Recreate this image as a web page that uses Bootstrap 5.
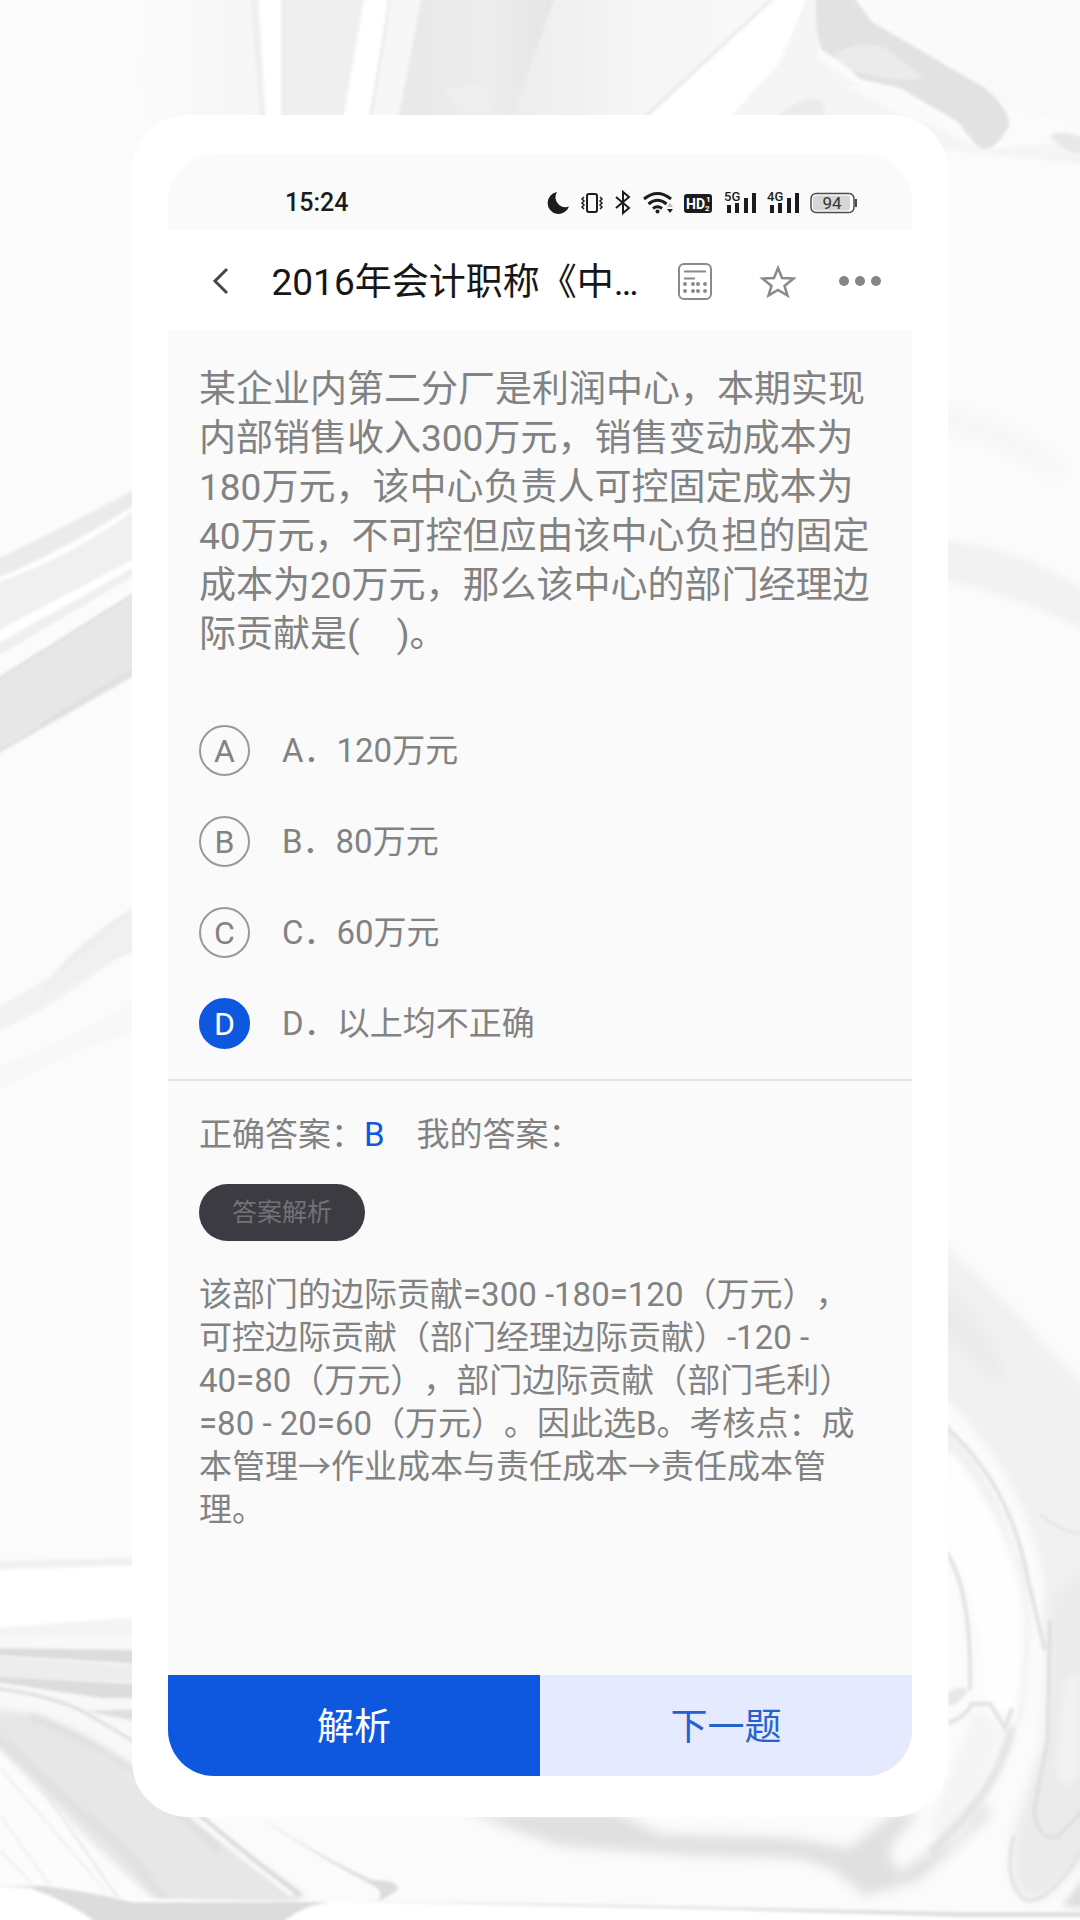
<!DOCTYPE html>
<html lang="zh-CN">
<head>
<meta charset="utf-8">
<meta name="viewport" content="width=device-width, initial-scale=1">
<title>答题</title>
<link href="https://cdn.jsdelivr.net/npm/bootstrap@5.3.0/dist/css/bootstrap.min.css" rel="stylesheet">
<style>
:root{--ink:#828282;--blue:#0d58df;--paper:#fafafa}
body{font-family:Roboto,"Noto Sans CJK SC",sans-serif;color:var(--ink);background:#fbfbfb;text-spacing-trim:space-all;font-feature-settings:"chws" 0,"halt" 0}
.backdrop{position:fixed;inset:0;width:100%;height:100%;z-index:-1}
.stage{padding:115px 24px 103px}
.phone{width:100%;max-width:816px;padding:40px 36px 41px;border-radius:56px;background:#fff}
.screen{border-radius:46px;overflow:hidden;background:var(--paper)}
.statusbar{height:75px;padding:20px 54px 0 117px;color:#1c1c20}
.clock{font-size:25px;font-weight:500;line-height:30px}
.appbar{height:101px;padding:0 24px 0 36px;background:#fff}
.appbar button{line-height:0;border:0}
.appbar h1{font-size:37px;line-height:48px;font-weight:400;color:#161616;padding-top:5px}
.question{padding:34px 31px 0}
.question p{font-size:37px;line-height:49px}
.choices{padding:66px 31px 30px;gap:40px}
.choice{font-size:33px;line-height:51px;gap:32px;cursor:pointer}
.choice i{width:51px;height:51px;border:2px solid #999;font-size:32px;font-style:normal;line-height:49px}
.choice input:checked+i{background:var(--blue);border-color:var(--blue);color:#fff}
.answers{border-top:2px solid #e4e4e4;padding:29px 36px 0 31px}
.answers dl{font-size:33px;line-height:50px}
.answers dd{color:var(--blue)}
.mine{margin-left:32px}
.pill{background:#3c3b42;color:#737277;font-size:25px;line-height:57px;padding:0 33px}
.explain{font-size:33px;line-height:43px;margin-top:32px}
.actions button{font-size:37px;line-height:97px;border:0;padding:4px 0 0;height:101px}
.go{background:var(--blue);color:#fff}
.next{background:#e5eafe;color:#2463cf}
</style>
<script src="https://cdn.jsdelivr.net/npm/bootstrap@5.3.0/dist/js/bootstrap.bundle.min.js"></script>
</head>
<body>
<svg class="backdrop" viewBox="0 0 1080 1920" preserveAspectRatio="xMidYMid slice" aria-hidden="true">
<defs>
<filter id="s1"><feGaussianBlur stdDeviation="1.500"/></filter>
<filter id="s2"><feGaussianBlur stdDeviation="3"/></filter>
<filter id="s4" x="-20%" y="-20%" width="140%" height="140%"><feGaussianBlur stdDeviation="6"/></filter>
<linearGradient id="g1"><stop offset="0" stop-color="#e8e8e8"/><stop offset=".6" stop-color="#ececec"/><stop offset="1" stop-color="#e5e5e5"/></linearGradient>
<linearGradient id="g2"><stop offset="0" stop-color="#ededed"/><stop offset=".5" stop-color="#f6f6f6"/><stop offset="1" stop-color="#f9f9f9"/></linearGradient>
<linearGradient id="g3"><stop offset="0" stop-color="#fbfbfb"/><stop offset="1" stop-color="#f6f6f6"/></linearGradient>
</defs>
<rect width="1080" height="1920" fill="#fbfbfb"/>
<g filter="url(#s1)">
<path d="M120 -5H255L266 120H150Z" fill="url(#g3)"/>
<path d="M250 -5H258L266 120H260Z" fill="#efefef"/>
<path d="M258 -5H281V120H266Z" fill="#fff"/>
<path d="M281 -5H365L343 120H281Z" fill="#efefef"/>
<path d="M365 -5H390L368 120H343Z" fill="#fff"/>
<path d="M390 -5H422L400 120H368Z" fill="#f7f7f7"/>
<path d="M389 -5H392L372 120H369Z" fill="#ececec"/>
<path d="M422 -5H556L512 120H398Z" fill="url(#g1)"/>
<path d="M440 90Q455 95 460 120H495Q480 90 500 80Z" fill="#eee"/>
<path d="M556 -5H780L645 120H512Z" fill="url(#g2)"/>
<path d="M774 -5H779L650 115H644Z" fill="#ebebeb"/>
<path d="M779 -5H808L800 25 780 62 728 120H645Z" fill="#fff"/>
<path d="M808 -5H818V60L850 80 980 150 1090 140V165L948 150 728 120 780 62Z" fill="#f5f5f5"/>
<path d="M850 -5H1090V125L1010 110 985 88Z" fill="#f9f9f9"/>
</g>
<g filter="url(#s1)">
<path d="M816 -5H852L872 22 985 88Q1006 105 1010 124L1000 140Q985 156 975 144L958 122 900 88 860 79 846 65 822 50Q815 38 816 -5Z" fill="#e2e2e2"/>
<path d="M834 56Q855 38 885 48L925 78Q900 84 850 70Z" fill="#ebebeb"/>
<path d="M778 116Q800 96 822 100L826 116Z" fill="#ebebeb"/>
<path d="M845 86Q890 80 945 125L910 120Z" fill="#fafafa"/>
<path d="M1050 136Q1060 128 1085 138V154Q1065 154 1050 136Z" fill="#e8e8e8"/>
</g>
<g filter="url(#s1)">
<path d="M-5 560Q70 525 140 486V510L-5 582Z" fill="#ebebeb"/>
<path d="M-5 582L140 504V560L-5 634Z" fill="#f0f0f0"/>
<path d="M-5 579Q60 554 140 502V506Q70 558 -5 583Z" fill="#fff"/>
<path d="M-5 632L140 556V564L-5 645Z" fill="#fff"/>
<path d="M-5 645L140 564V572L-5 658Z" fill="#efefef"/>
<path d="M-5 681L140 590V671L-5 754Z" fill="#e7e7e7"/>
<path d="M-5 681L140 590M-5 754L140 671M40 725L140 666" stroke="#dadada" stroke-width="2" fill="none"/>
<path d="M140 903V948Q60 985 35 1006 50 960 140 903Z" fill="#ededed"/>
<path d="M-5 1008Q80 965 140 903V940Q60 1005 -5 1033Z" fill="#f0f0f0" opacity=".8"/>
<path d="M-5 1068Q80 1035 140 998V1030Q70 1050 -5 1092Z" fill="#f8f8f8"/>
</g>
<g filter="url(#s4)">
<path d="M940 405Q1010 415 1070 470L1050 478Q1000 445 940 430Z" fill="#f7f7f7"/>
</g>
<g filter="url(#s2)">
<path d="M940 541Q1020 545 1090 595V632Q1010 592 940 580Z" fill="#f2f2f2"/>
</g>
<g filter="url(#s1)">
<path d="M-5 1561L140 1558V1565L-5 1569Z" fill="#f0f0f0"/>
<path d="M-5 1570L140 1566V1637H-5Z" fill="#fff"/>
<path d="M-5 1628Q70 1622 140 1617V1636H-5Z" fill="#f4f4f4"/>
<path d="M-5 1637H140V1650L-5 1646Z" fill="#f8f8f8"/>
<path d="M-5 1648L140 1650V1664L-5 1655Z" fill="#dcdcdc"/>
<path d="M-5 1656L140 1666V1682L-5 1678Z" fill="#ededed"/>
<path d="M-5 1677L140 1684V1698H100L-5 1682Z" fill="#dcdcdc"/>
<path d="M-5 1682L100 1698H140V1780L-5 1715Z" fill="#f8f8f8"/>
<path d="M85 1711L140 1709V1722Z" fill="#dfdfdf"/>
<path d="M-5 1688Q50 1695 84 1712L140 1745" stroke="#dcdcdc" stroke-width="3" fill="none"/>
</g>
<g filter="url(#s2)">
<path d="M-10 1710Q35 1708 70 1735L140 1782 190 1817 306 1895 290 1905H160L100 1850 -10 1740Z" fill="#e7e7e7"/>
<path d="M30 1716Q75 1730 140 1775L220 1850" stroke="#dedede" stroke-width="8" fill="none"/>
<path d="M-5 1735Q60 1795 130 1855L165 1902" stroke="#e0e0e0" stroke-width="9" fill="none"/>
<path d="M-10 1745Q60 1810 118 1900L60 1888H-10Z" fill="#fcfcfc"/>
</g>
<g filter="url(#s1)">
<path d="M0 1768L105 1890M0 1815L50 1886M0 1850L32 1884" stroke="#f2f2f2" stroke-width="3" fill="none"/>
<path d="M40 1785L118 1898" stroke="#e6e6e6" stroke-width="2" fill="none"/>
<path d="M184 1808L240 1855 292 1895" stroke="#f8f8f8" stroke-width="5" fill="none"/>
<path d="M196 1812L252 1858 300 1895" stroke="#dadada" stroke-width="4" fill="none"/>
<path d="M256 1815Q330 1862 372 1880 400 1880 398 1890L378 1902Q385 1890 370 1884 315 1855 256 1815Z" fill="#dcdcdc"/>
</g>
<g filter="url(#s4)">
<path d="M935 1238Q1000 1290 1095 1400V1720L1045 1650Q1020 1540 935 1440Z" fill="#f1f1f1"/>
<path d="M940 1285Q1000 1330 1004 1385 980 1370 940 1335Z" fill="#ebebeb"/>
<path d="M1052 1600Q1068 1575 1095 1570V1850L1058 1885Q1045 1905 1020 1895 1005 1870 1018 1820L1044 1740Z" fill="#ebebeb"/>
</g>
<g filter="url(#s2)">
<path d="M940 1393Q1030 1480 1045 1590L1038 1650Q1020 1500 940 1420Z" fill="#fbfbfb"/>
<path d="M948 1450Q1040 1550 1015 1710 1000 1720 985 1695 985 1610 948 1550Z" fill="#fefefe"/>
<path d="M1022 1560Q1034 1640 1018 1725" stroke="#f3f3f3" stroke-width="6" fill="none"/>
<path d="M975 1706L1004 1730Q985 1790 940 1842L930 1830Z" fill="#f5f5f5"/>
<path d="M1012 1726Q1000 1790 930 1852" stroke="#dedede" stroke-width="7" fill="none"/>
<path d="M1064 1680L1080 1670V1770Q1065 1800 1056 1770Z" fill="#f2f2f2"/>
<path d="M1062 1906L1085 1876V1908Z" fill="#dedede"/>
</g>
<g filter="url(#s1)">
<path d="M940 1422Q1010 1480 1028 1580L1045 1650" stroke="#e2e2e2" stroke-width="4" fill="none"/>
<path d="M946 1552Q972 1590 970 1690M948 1723Q965 1718 972 1704L990 1704 1005 1728 1012 1708" stroke="#e2e2e2" stroke-width="4" fill="none"/>
<path d="M948 1692Q960 1684 968 1690 960 1705 948 1706Z" fill="#e8e8e8"/>
<path d="M1050 1620L1048 1740 1034 1810Q1038 1842 1058 1836L1085 1808" stroke="#e0e0e0" stroke-width="4" fill="none"/>
<path d="M1040 1514Q1060 1532 1085 1534" stroke="#e6e6e6" stroke-width="3" fill="none"/>
<path d="M1014 1835Q1002 1880 1025 1900 1050 1905 1085 1845" stroke="#e4e4e4" stroke-width="4" fill="none"/>
</g>
<g filter="url(#s4)">
<path d="M465 1812H615L660 1834 790 1838 850 1848 895 1812H918L888 1850 898 1872 960 1835 985 1800 990 1815 920 1880 866 1896 830 1868 795 1858 700 1856 560 1846Z" fill="#e0e0e0"/>
</g>
<g filter="url(#s1)">
<path d="M-5 1887H50L110 1898 330 1902 960 1911H1085V1925H-5Z" fill="#fff"/>
<path d="M-5 1886H42Q80 1890 132 1902H330Q300 1906 280 1925H100Q70 1902 30 1888Z" fill="#dcdcdc"/>
<path d="M330 1901L560 1904 960 1912H1085V1917H960L700 1909Z" fill="#dedede"/>
</g>
</svg>

<main class="stage min-vh-100 d-flex justify-content-center">
<div class="phone d-flex">
<div class="screen d-flex flex-column flex-fill">
<div class="statusbar d-flex align-items-center justify-content-between">
<time class="clock">15:24</time>
<div class="d-flex" aria-hidden="true">
<svg width="29" height="28" viewBox="546 188 29 28"><path d="M557 191a11 11 0 1 0 12 14.500a10 10 0 0 1-12-14.500Z" fill="currentColor"/></svg>
<svg width="33" height="28" viewBox="575 188 33 28" fill="none" stroke="currentColor" stroke-width="2"><rect x="587" y="193" width="10" height="18" rx="2"/><path d="M584 196l-2 2 2 2-2 2 2 2-2 2 2 2M600 196l2 2-2 2 2 2-2 2 2 2-2 2" stroke-width="1.500"/></svg>
<svg width="30" height="28" viewBox="608 188 30 28" fill="none" stroke="currentColor" stroke-width="2"><path d="M616 196l13 11-6 5v-21l6 5-13 11"/></svg>
<svg width="40" height="28" viewBox="638 188 40 28" fill="none" stroke="currentColor" stroke-width="3"><path d="M644 198q13.500-11 27 0M648.500 203q9-7.500 18 0M653 207.500q4.500-3.500 9 0"/><circle cx="657.500" cy="210.500" r="2" fill="currentColor" stroke="none"/><path d="M667 208h6l-3 4z" fill="currentColor" stroke="none"/><path d="M667 206h6l-3-4z" fill="#bbb" stroke="none"/></svg>
<svg width="42" height="28" viewBox="678 188 42 28"><rect x="684" y="193" width="28" height="19" rx="3" fill="currentColor"/><text x="686" y="208" font-size="14" font-weight="700" fill="#fff">HD</text><text x="706" y="201" font-size="8" font-weight="700" fill="#fff">1</text><text x="705" y="210" font-size="8" font-weight="700" fill="#fff">2</text></svg>
<svg width="43" height="28" viewBox="720 188 43 28" fill="currentColor"><text x="724" y="200" font-size="13" font-weight="500">5G</text><path d="M727 204h4v8h-4zM735 202h4v10h-4zM744 197h4v15h-4zM752 192h4v20h-4z"/></svg>
<svg width="42" height="28" viewBox="763 188 42 28" fill="currentColor"><text x="767" y="200" font-size="13" font-weight="500">4G</text><path d="M770 204h4v8h-4zM778 202h4v10h-4zM787 197h4v15h-4zM795 192h4v20h-4z"/></svg>
<svg width="53" height="28" viewBox="805 188 53 28"><rect x="811" y="192.500" width="43" height="19" rx="5" fill="#fff" stroke="#4a4a4d" stroke-width="1.500"/><rect x="813" y="194.500" width="37" height="15" rx="3" fill="#d6d6d6"/><path d="M855 198h2v8h-2z" fill="#4a4a4d"/><text x="832" y="208" font-size="17" text-anchor="middle" fill="#333">94</text></svg>
</div>
</div>

<header class="appbar d-flex align-items-center">
<button class="btn p-0 me-auto" type="button" aria-label="返回"><svg width="32" height="40" viewBox="204 260 32 40"><path d="M227 268l-12 12 12 12" fill="none" stroke="#48474d" stroke-width="3"/></svg></button>
<h1 class="mb-0 text-nowrap">2016年会计职称《中…</h1>
<div class="d-flex ms-auto gap-4">
<button class="btn p-0" type="button" aria-label="计算器"><svg width="50" height="44" viewBox="674 258 50 44" fill="none" stroke="#8a8a8a" stroke-width="2"><rect x="679" y="263" width="32" height="35" rx="5"/><path d="M684 270.500h22M684 277.500h11"/><path d="M685 283h0M693 283h0M698 283h0M705 283h0M685 290h0M693 290h0M698 290h0M705 290h0" stroke-width="4" stroke-linecap="round"/></svg></button>
<button class="btn p-0" type="button" aria-label="收藏"><svg width="60" height="44" viewBox="748 258 60 44"><path d="M778 267l4 10 11.500.5-9 7.500 3 9.500-9.500-5.500-9.500 5.500 3-9.500-9-7.500 11.500-.5Z" fill="none" stroke="#8a8a8a" stroke-width="2.500"/></svg></button>
<button class="btn p-0" type="button" aria-label="更多"><svg width="56" height="44" viewBox="832 258 56 44" fill="#858585"><circle cx="844" cy="280" r="5"/><circle cx="860" cy="280" r="5"/><circle cx="876" cy="280" r="5"/></svg></button>
</div>
</header>

<section class="question"><p class="mb-0">某企业内第二分厂是利润中心，本期实现内部销售收入300万元，销售变动成本为180万元，该中心负责人可控固定成本为40万元，不可控但应由该中心负担的固定成本为20万元，那么该中心的部门经理边际贡献是(　)。</p></section>

<section class="choices d-flex flex-column" aria-label="选项">
<label class="choice d-flex align-items-center"><input class="visually-hidden" type="radio" name="pick"><i class="rounded-circle text-center">A</i><span>A．120万元</span></label>
<label class="choice d-flex align-items-center"><input class="visually-hidden" type="radio" name="pick"><i class="rounded-circle text-center">B</i><span>B．80万元</span></label>
<label class="choice d-flex align-items-center"><input class="visually-hidden" type="radio" name="pick"><i class="rounded-circle text-center">C</i><span>C．60万元</span></label>
<label class="choice d-flex align-items-center"><input class="visually-hidden" type="radio" name="pick" checked><i class="rounded-circle text-center">D</i><span>D．以上均不正确</span></label>
</section>

<section class="answers flex-fill">
<dl class="d-flex mb-0"><dt class="fw-normal">正确答案：</dt><dd class="mb-0">B</dd><dt class="fw-normal mine">我的答案：</dt></dl>
<span class="pill rounded-pill d-inline-block mt-4">答案解析</span>
<p class="explain mb-0">该部门的边际贡献=300 -180=120（万元），可控边际贡献（部门经理边际贡献）-120 - 40=80（万元），部门边际贡献（部门毛利）=80 - 20=60（万元）。因此选B。考核点：成本管理→作业成本与责任成本→责任成本管理。</p>
</section>

<nav class="actions d-flex">
<button class="go w-50" type="button">解析</button>
<button class="next w-50" type="button">下一题</button>
</nav>
</div>
</div>
</main>
</body>
</html>
